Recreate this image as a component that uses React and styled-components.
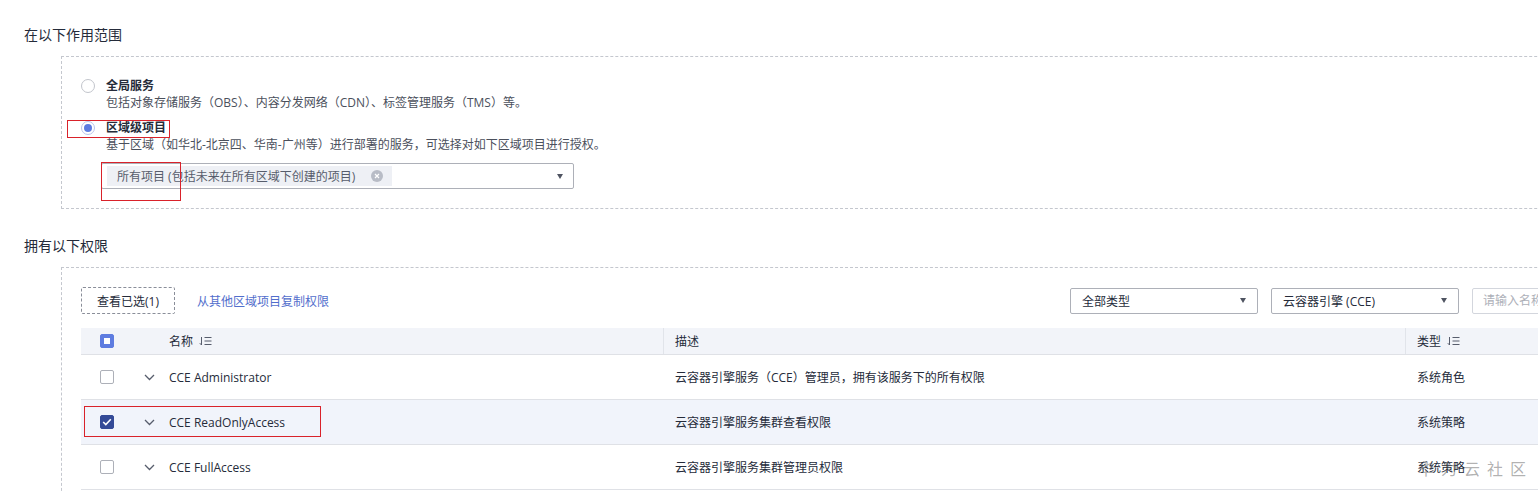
import React from 'react';
import styled, { createGlobalStyle } from 'styled-components';

const GlobalStyle = createGlobalStyle`
  body {
    margin: 0;
    background: #fff;
    overflow: hidden;
    font-family: "Open Sans", "Noto Sans CJK SC", sans-serif;
    color: #252b3a;
  }
`;

const Page = styled.div`
  position: relative;
  width: 1716px;
  box-sizing: border-box;
  padding: 25px 24px 40px 24px;
`;

const SectionTitle = styled.div`
  font-size: 14px;
  line-height: 20px;
  color: #252b3a;
  margin-top: ${p => p.$top || 0}px;
  margin-bottom: 11px;
`;

const DashedBox = styled.div`
  margin-left: 37px;
  border: 1px dashed #c4c7ce;
  padding: ${p => p.$pad};
`;

const Option = styled.div`
  position: relative;
  display: grid;
  grid-template-columns: 14px 1fr;
  column-gap: 11px;
  & + & {
    margin-top: 8px;
  }
`;

const Radio = styled.span`
  box-sizing: border-box;
  width: 14px;
  height: 14px;
  margin-top: 2px;
  border-radius: 50%;
  border: 1px solid ${p => (p.$on ? '#b9c4ea' : '#c2c5cc')};
  display: flex;
  align-items: center;
  justify-content: center;
  &::after {
    content: '';
    width: 8px;
    height: 8px;
    border-radius: 50%;
    background: #5e7ce0;
    display: ${p => (p.$on ? 'block' : 'none')};
  }
`;

const OptionTitle = styled.div`
  font-size: 12px;
  line-height: 17px;
  font-weight: 700;
  color: #252b3a;
`;

const OptionDesc = styled.div`
  grid-column: 2;
  font-size: 12px;
  line-height: 17px;
  color: #4b505c;
`;

const Highlight = styled.div`
  position: absolute;
  left: ${p => p.$x}px;
  top: ${p => p.$y}px;
  width: ${p => p.$w}px;
  height: ${p => p.$h}px;
  box-sizing: border-box;
  border: 1px solid #d9222a;
  pointer-events: none;
`;

const TagSelect = styled.div`
  position: relative;
  grid-column: 2;
  margin: 10px 0 0 -5px;
  width: 473px;
  height: 26px;
  box-sizing: border-box;
  border: 1px solid #adb0b8;
  border-radius: 2px;
  display: flex;
  align-items: center;
  padding: 0 10px 0 5px;
`;

const Tag = styled.div`
  display: flex;
  align-items: center;
  height: 20px;
  padding: 0 9px 0 10px;
  background: #eef0f5;
  font-size: 12px;
  color: #575d6c;
  gap: 16px;
`;

const ClearIcon = styled.span`
  width: 12px;
  height: 12px;
  border-radius: 50%;
  background: #b8bcc6;
  display: flex;
  align-items: center;
  justify-content: center;
`;

const Caret = styled.span`
  margin-left: auto;
  width: 0;
  height: 0;
  border-left: 3.5px solid transparent;
  border-right: 3.5px solid transparent;
  border-top: 5px solid #4f5461;
`;

const Toolbar = styled.div`
  display: flex;
  align-items: center;
  height: 27px;
`;

const GhostButton = styled.button`
  width: 94px;
  height: 27px;
  box-sizing: border-box;
  border: 1px dashed #8a8e99;
  border-radius: 2px;
  background: #fff;
  font-family: inherit;
  font-size: 12px;
  color: #252b3a;
  padding: 0;
`;

const LinkText = styled.span`
  margin-left: 22px;
  font-size: 12px;
  color: #526ecc;
`;

const ToolbarRight = styled.div`
  margin-left: auto;
  display: flex;
  gap: 13px;
`;

const FilterSelect = styled.div`
  width: 188px;
  height: 26px;
  box-sizing: border-box;
  border: 1px solid #adb0b8;
  border-radius: 2px;
  padding: 0 11px 0 11px;
  display: flex;
  align-items: center;
  font-size: 12px;
  color: #252b3a;
`;

const SearchInput = styled.input`
  width: 200px;
  height: 26px;
  box-sizing: border-box;
  border: 1px solid #d3d6dd;
  border-radius: 2px;
  padding: 0 10px;
  font-family: inherit;
  font-size: 12px;
  outline: none;
  &::placeholder {
    color: #adb0b8;
  }
`;

const Table = styled.div`
  margin-top: 14px;
`;

const Row = styled.div`
  position: relative;
  display: grid;
  grid-template-columns: 56px 24px 502px 742px 1fr;
  align-items: center;
  height: ${p => (p.$head ? 26 : 44)}px;
  border-bottom: 1px solid #dfe1e6;
  background: ${p => (p.$head ? '#f2f4f9' : p.$selected ? '#f1f4fb' : '#fff')};
  font-size: 12px;
  color: #252b3a;
`;

const CheckCell = styled.div`
  padding-left: 19px;
  display: flex;
  align-items: center;
`;

const Cell = styled.div`
  height: 100%;
  display: flex;
  align-items: center;
  box-sizing: border-box;
  padding-left: ${p => (p.$divider ? 11 : p.$pad ?? 12)}px;
  border-left: ${p => (p.$divider ? '1px solid #e1e4ea' : 'none')};
  gap: 6px;
`;

const ExpandCell = styled.div`
  display: flex;
  justify-content: center;
  align-items: center;
`;

const Checkbox = styled.span`
  box-sizing: border-box;
  width: 14px;
  height: 14px;
  border-radius: 2px;
  display: flex;
  align-items: center;
  justify-content: center;
  border: 1px solid ${p => (p.$state === 'checked' ? '#344a97' : p.$state === 'partial' ? '#5e7ce0' : '#adb0b8')};
  background: ${p => (p.$state === 'checked' ? '#344a97' : p.$state === 'partial' ? '#5e7ce0' : '#fff')};
`;

const PartialMark = styled.span`
  width: 6px;
  height: 6px;
  background: #fff;
`;

const Watermark = styled.div`
  position: absolute;
  left: 1418px;
  top: 456px;
  font-size: 16px;
  letter-spacing: 7px;
  color: rgba(80, 80, 80, 0.45);
  font-family: "Noto Sans CJK SC", sans-serif;
  pointer-events: none;
`;

const SortIcon = () => (
  <svg width="14" height="10" viewBox="0 0 14 10" fill="none" stroke="#575d6c" strokeWidth="1">
    <path d="M2.5 1v8M0.8 7.2L2.5 9" />
    <path d="M5.5 1.5h7M5.5 5h7M5.5 8.5h7" />
  </svg>
);

const Chevron = () => (
  <svg width="11" height="7" viewBox="0 0 11 7" fill="none" stroke="#575d6c" strokeWidth="1.3">
    <path d="M1 1l4.5 4.5L10 1" />
  </svg>
);

const Tick = () => (
  <svg width="10" height="8" viewBox="0 0 10 8" fill="none" stroke="#fff" strokeWidth="1.6">
    <path d="M1.2 4l2.6 2.5L8.8 1.3" />
  </svg>
);

const Cross = () => (
  <svg width="6" height="6" viewBox="0 0 6 6" stroke="#fff" strokeWidth="1.2">
    <path d="M1 1l4 4M5 1L1 5" />
  </svg>
);

const policies = [
  { name: 'CCE Administrator', desc: '云容器引擎服务（CCE）管理员，拥有该服务下的所有权限', type: '系统角色' },
  { name: 'CCE ReadOnlyAccess', desc: '云容器引擎服务集群查看权限', type: '系统策略', selected: true },
  { name: 'CCE FullAccess', desc: '云容器引擎服务集群管理员权限', type: '系统策略' },
];

const App = () => {
  return (
    <Page>
      <GlobalStyle />
      <SectionTitle>在以下作用范围</SectionTitle>
      <DashedBox $pad="20px 20px 19px 19px">
        <Option>
          <Radio />
          <OptionTitle>全局服务</OptionTitle>
          <OptionDesc>包括对象存储服务（OBS）、内容分发网络（CDN）、标签管理服务（TMS）等。</OptionDesc>
        </Option>
        <Option>
          <Radio $on />
          <OptionTitle>区域级项目</OptionTitle>
          <Highlight $x={-14} $y={1} $w={103} $h={18} />
          <OptionDesc>基于区域（如华北-北京四、华南-广州等）进行部署的服务，可选择对如下区域项目进行授权。</OptionDesc>
          <TagSelect>
            <Tag>
              <span>所有项目 (包括未来在所有区域下创建的项目)</span>
              <ClearIcon><Cross /></ClearIcon>
            </Tag>
            <Caret />
            <Highlight $x={-1} $y={-2} $w={80} $h={39} />
          </TagSelect>
        </Option>
      </DashedBox>

      <SectionTitle $top={27}>拥有以下权限</SectionTitle>
      <DashedBox $pad="19px 19px 20px 19px">
        <Toolbar>
          <GhostButton>查看已选(1)</GhostButton>
          <LinkText>从其他区域项目复制权限</LinkText>
          <ToolbarRight>
            <FilterSelect>全部类型<Caret /></FilterSelect>
            <FilterSelect>云容器引擎 (CCE)<Caret /></FilterSelect>
            <SearchInput placeholder="请输入名称" />
          </ToolbarRight>
        </Toolbar>
        <Table>
          <Row $head>
            <CheckCell>
              <Checkbox $state="partial"><PartialMark /></Checkbox>
            </CheckCell>
            <span />
            <Cell $pad={8}>名称 <SortIcon /></Cell>
            <Cell $divider>描述</Cell>
            <Cell $divider>类型 <SortIcon /></Cell>
          </Row>
          {policies.map(p => (
            <Row key={p.name} $selected={p.selected}>
              <CheckCell>
                <Checkbox $state={p.selected ? 'checked' : 'none'}>{p.selected && <Tick />}</Checkbox>
              </CheckCell>
              <ExpandCell><Chevron /></ExpandCell>
              <Cell $pad={8}>{p.name}</Cell>
              <Cell>{p.desc}</Cell>
              <Cell>{p.type}</Cell>
              {p.selected && <Highlight $x={3} $y={6} $w={237} $h={31} />}
            </Row>
          ))}
        </Table>
      </DashedBox>
      <Watermark>华为云社区</Watermark>
    </Page>
  );
};

export default App;
